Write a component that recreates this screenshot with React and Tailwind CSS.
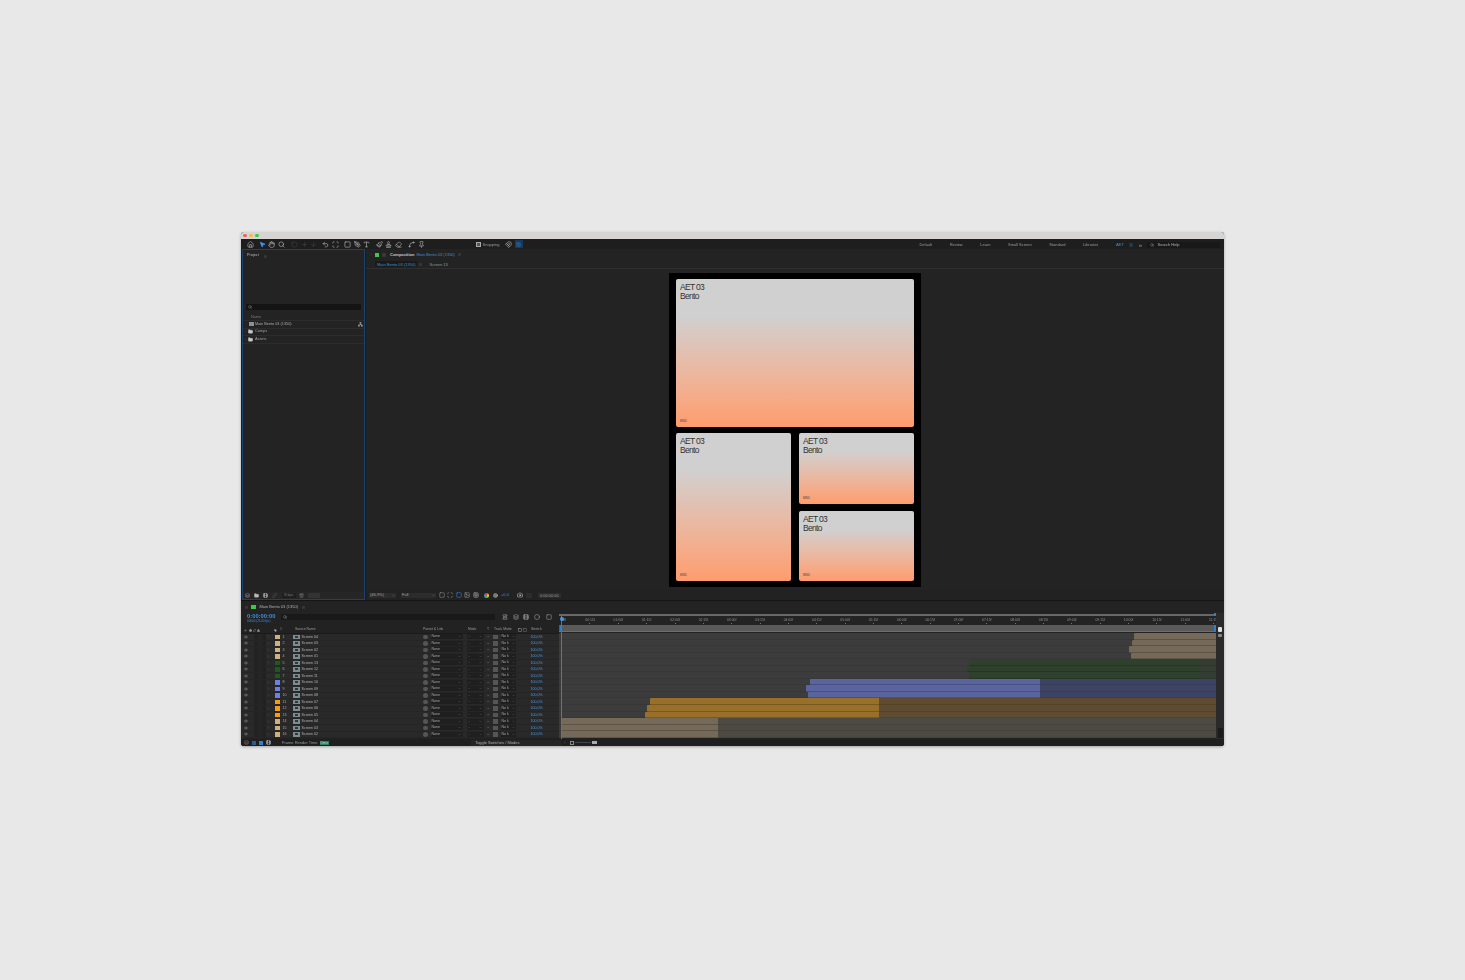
import {
  Home, MousePointer2, Hand, Search, RotateCcw, Plus, ArrowDown, Undo2, Scan, Square, PenTool, Type,
  Paintbrush, Stamp, Eraser, Spline, Pin, Magnet, Grid3x3, Folder, Network, Trash2, Camera, Image,
  Film, Sparkles, Layers, Circle, Eye, Lock, Tag, Spool, ChevronDown, ChevronRight, Menu,
} from 'lucide-react';

const LAYERS = [
  { n: 1, name: 'Screen 04', sw: 'bg-[#cdb27f]', start: 1134, bright: 1216, bar: 'bg-[#75695a]', dim: 'bg-[#4d4a43]' },
  { n: 2, name: 'Screen 03', sw: 'bg-[#cdb27f]', start: 1132, bright: 1216, bar: 'bg-[#75695a]', dim: 'bg-[#4d4a43]' },
  { n: 3, name: 'Screen 02', sw: 'bg-[#cdb27f]', start: 1129, bright: 1216, bar: 'bg-[#75695a]', dim: 'bg-[#4d4a43]' },
  { n: 4, name: 'Screen 01', sw: 'bg-[#cdb27f]', start: 1131, bright: 1216, bar: 'bg-[#75695a]', dim: 'bg-[#4d4a43]' },
  { n: 5, name: 'Screen 13', sw: 'bg-[#1c5a1c]', start: 969, bright: 1200, bar: 'bg-[#2f412c]', dim: 'bg-[#333d31]' },
  { n: 6, name: 'Screen 12', sw: 'bg-[#1c5a1c]', start: 967, bright: 1200, bar: 'bg-[#2f412c]', dim: 'bg-[#333d31]' },
  { n: 7, name: 'Screen 11', sw: 'bg-[#1c5a1c]', start: 969, bright: 1200, bar: 'bg-[#2f412c]', dim: 'bg-[#333d31]' },
  { n: 8, name: 'Screen 10', sw: 'bg-[#6d7fe8]', start: 810, bright: 1040, bar: 'bg-[#5a65a0]', dim: 'bg-[#3d4463]' },
  { n: 9, name: 'Screen 09', sw: 'bg-[#6d7fe8]', start: 806, bright: 1040, bar: 'bg-[#5a65a0]', dim: 'bg-[#3d4463]' },
  { n: 10, name: 'Screen 08', sw: 'bg-[#6d7fe8]', start: 808, bright: 1040, bar: 'bg-[#5a65a0]', dim: 'bg-[#3d4463]' },
  { n: 11, name: 'Screen 07', sw: 'bg-[#f59c12]', start: 650, bright: 879, bar: 'bg-[#98702a]', dim: 'bg-[#5e4b30]' },
  { n: 12, name: 'Screen 06', sw: 'bg-[#f59c12]', start: 647, bright: 879, bar: 'bg-[#98702a]', dim: 'bg-[#5e4b30]' },
  { n: 13, name: 'Screen 05', sw: 'bg-[#f59c12]', start: 645, bright: 879, bar: 'bg-[#98702a]', dim: 'bg-[#5e4b30]' },
  { n: 14, name: 'Screen 04', sw: 'bg-[#cdb27f]', start: 561, bright: 718, bar: 'bg-[#75695a]', dim: 'bg-[#4d4a43]' },
  { n: 15, name: 'Screen 03', sw: 'bg-[#cdb27f]', start: 561, bright: 718, bar: 'bg-[#75695a]', dim: 'bg-[#4d4a43]' },
  { n: 16, name: 'Screen 02', sw: 'bg-[#cdb27f]', start: 561, bright: 718, bar: 'bg-[#75695a]', dim: 'bg-[#4d4a43]' },
];

const RULER = [];
for (let i = 1; i <= 23; i++) {
  const sec = Math.floor(i / 2);
  RULER.push(`${String(sec).padStart(2, '0')}:${i % 2 ? '15' : '00'}f`);
}

function Tool({ icon: Icon, ml, dim, active }) {
  return (
    <span className={`${ml} w-[7px] h-[7px] flex items-center justify-center shrink-0`}>
      <Icon
        size={7}
        strokeWidth={2}
        className={active ? 'text-[#3f9bf0] fill-[#3f9bf0]' : dim ? 'text-[#444]' : 'text-[#bdbdbd]'}
      />
    </span>
  );
}

function Card({ className }) {
  return (
    <div className={`${className} rounded-[2px] bg-linear-to-b from-[#d0d0d0] from-25% to-[#ff9c6c] flex flex-col justify-between px-[4px] pt-[4px] pb-[4px]`}>
      <div className="text-[8.5px] leading-[9px] tracking-[-0.7px] text-[#333]">
        <div>AET 03</div>
        <div>Bento</div>
      </div>
      <div className="text-[3px] leading-[4px] text-[#444]">MND</div>
    </div>
  );
}

function LayerRow({ layer }) {
  return (
    <div className="h-[6.5px] flex items-center bg-[#292929] border-b border-[#252525] text-[3.6px] text-[#a8a8a8] shrink-0">
      <span className="w-[10px] flex justify-center"><Eye size={4} className="text-[#999]" /></span>
      <span className="w-[4px] h-full ml-[3px] bg-[#222]" />
      <span className="w-[4px] h-full bg-[#252525]" />
      <span className="w-[4px] h-full bg-[#222]" />
      <span className="w-[5px] ml-[1px] text-[#777]"><ChevronRight size={3} /></span>
      <span className={`${layer.sw} w-[4.5px] h-[4.5px] ml-[3px]`} />
      <span className="w-[10px] ml-[3px] pt-[1px]">{layer.n}</span>
      <span className="w-[7px] h-[4.5px] bg-[#7d8c90] flex items-center justify-center">
        <span className="w-[3px] h-[2px] bg-[#2c3a40]" />
      </span>
      <span className="w-[120px] ml-[2px] pt-[1px] text-[#b5b5b5]">{layer.name}</span>
      <span className="w-[5px] h-[4.5px] rounded-full bg-[#555] ml-[1px]" />
      <span className="w-[32px] h-[5px] ml-[3px] bg-[#1f1f1f] flex items-center justify-between pl-[1px] pr-[2px]">
        None<ChevronDown size={3} className="text-[#888]" />
      </span>
      <span className="w-[17px] h-[5px] ml-[4px] bg-[#1f1f1f] flex items-center justify-between px-[2px]">
        -<ChevronDown size={3} className="text-[#888]" />
      </span>
      <span className="w-[5px] ml-[2px] text-center">-</span>
      <span className="w-[5px] h-[4.5px] ml-[2px] bg-[#555]" />
      <span className="w-[15px] h-[5px] ml-[3px] bg-[#1f1f1f] flex items-center justify-between pl-[1px] pr-[1px]">
        No k<ChevronDown size={3} className="text-[#888]" />
      </span>
      <span className="ml-[15px] pt-[1px] text-[#4a9ae6]">100,0%</span>
    </div>
  );
}

function TrackRow({ layer }) {
  const left = layer.start - 559;
  const width = layer.bright - layer.start;
  return (
    <div className="h-[6.55px] flex bg-[#3c3c3c] shrink-0">
      <div className="h-full border-b border-[#373737] shrink-0" style={{ width: left }} />
      <div className={`${layer.bar} rounded-l-[1px] h-full border-b border-black/20 shrink-0`} style={{ width }} />
      <div className={`${layer.dim} flex-1 h-full border-b border-black/10`} />
    </div>
  );
}

export default function App() {
  return (
    <div className="h-[980px] w-full bg-[#e9e8e8] flex items-center justify-center font-['Liberation_Sans',sans-serif]">
      <div className="w-[983px] h-[514px] flex flex-col rounded-[3px] overflow-hidden bg-[#1c1c1c] shadow-[0_1px_3px_rgba(0,0,0,0.3)] -translate-y-px blur-[0.35px]">
        {/* title bar */}
        <div className="h-[7px] bg-[#d6d5d4] flex items-center gap-[2.5px] pl-[2px] shrink-0">
          <span className="w-[3.5px] h-[3.5px] rounded-full bg-[#f2635b]" />
          <span className="w-[3.5px] h-[3.5px] rounded-full bg-[#f6bd3b]" />
          <span className="w-[3.5px] h-[3.5px] rounded-full bg-[#3cc84b]" />
        </div>

        {/* toolbar */}
        <div className="h-[10px] bg-[#1e1e1e] flex items-center shrink-0 text-[4px] text-[#9a9a9a]">
          <Tool icon={Home} ml="ml-[5.5px]" />
          <Tool icon={MousePointer2} ml="ml-[5px]" active />
          <Tool icon={Hand} ml="ml-[2px]" />
          <Tool icon={Search} ml="ml-[3px]" />
          <Tool icon={RotateCcw} ml="ml-[6px]" dim />
          <Tool icon={Plus} ml="ml-[3px]" dim />
          <Tool icon={ArrowDown} ml="ml-[2px]" dim />
          <Tool icon={Undo2} ml="ml-[5px]" />
          <Tool icon={Scan} ml="ml-[3px]" />
          <Tool icon={Square} ml="ml-[5px]" />
          <Tool icon={PenTool} ml="ml-[3px]" />
          <Tool icon={Type} ml="ml-[2px]" />
          <Tool icon={Paintbrush} ml="ml-[6px]" />
          <Tool icon={Stamp} ml="ml-[2px]" />
          <Tool icon={Eraser} ml="ml-[3px]" />
          <Tool icon={Spline} ml="ml-[6px]" />
          <Tool icon={Pin} ml="ml-[3px]" />
          <span className="w-[5px] h-[5px] ml-[51px] border-[0.5px] border-[#aaa] bg-[#555] shrink-0" />
          <span className="ml-[2px] w-[19px] pt-[1px]">Snapping</span>
          <Tool icon={Magnet} ml="ml-[3px]" />
          <span className="ml-[3px] w-[8px] h-[8px] bg-[#16395c] flex items-center justify-center">
            <Grid3x3 size={5} className="text-[#2f6fb0]" />
          </span>
          <div className="ml-auto flex items-center pt-[1px]">
            <span>Default</span>
            <span className="ml-[17.5px]">Review</span>
            <span className="ml-[17.5px]">Learn</span>
            <span className="ml-[17.5px]">Small Screen</span>
            <span className="ml-[17.5px]">Standard</span>
            <span className="ml-[17.5px]">Libraries</span>
            <span className="ml-[17.5px] text-[#3f8fd8]">AET</span>
            <Menu size={4} className="ml-[5px] text-[#3f8fd8]" />
            <span className="ml-[6px] text-[6px] leading-none">»</span>
            <div className="ml-[5px] mr-[4px] w-[73px] h-[6px] bg-[#181818] flex items-center pl-[3px]">
              <Search size={4} className="text-[#bbb]" />
              <span className="ml-[3.5px] text-[#b4b4b4]">Search Help</span>
            </div>
          </div>
        </div>

        {/* main area */}
        <div className="h-[351px] flex shrink-0 bg-[#1c1c1c]">
          {/* project */}
          <div className="w-[125px] pl-px pr-px shrink-0 h-full">
            <div className="h-full border border-[#1b4270] bg-[#232323] flex flex-col text-[3.8px] text-[#a0a0a0]">
              <div className="h-[11px] flex items-center pl-[4px] pt-[1px] shrink-0">
                <span className="text-[#bbb]">Project</span>
                <Menu size={3} className="ml-[5px] text-[#777]" />
              </div>
              <div className="h-[6px] mt-[43px] mx-[3px] bg-[#141414] flex items-center pl-[2px] shrink-0">
                <Search size={4} className="text-[#bbb]" />
              </div>
              <div className="h-[7px] mt-[4px] pl-[8px] text-[#777] border-b border-[#2c2c2c] leading-[7px] shrink-0">Name</div>
              <div className="h-[7.5px] flex items-center pl-[6px] pr-[1px] border-b border-[#2c2c2c] shrink-0">
                <span className="w-[5px] h-[4px] bg-[#8a9296]" />
                <span className="ml-[1px] pt-[1px] text-[#aaa]">Main Bento 03 (1350)</span>
                <Network size={5} className="ml-auto text-[#c9c9c9]" />
              </div>
              <div className="h-[7.5px] flex items-center pl-[1px] border-b border-[#2c2c2c] shrink-0">
                <ChevronRight size={3} className="text-[#777]" />
                <Folder size={5} className="ml-[1px] text-[#c9c9c9] fill-[#c9c9c9]" />
                <span className="ml-[2px] pt-[1px]">Comps</span>
              </div>
              <div className="h-[7.5px] flex items-center pl-[1px] border-b border-[#2c2c2c] shrink-0">
                <ChevronRight size={3} className="text-[#777]" />
                <Folder size={5} className="ml-[1px] text-[#c9c9c9] fill-[#c9c9c9]" />
                <span className="ml-[2px] pt-[1px]">Assets</span>
              </div>
              <div className="mt-auto h-[7px] flex items-center pl-[2px] bg-[#262626] shrink-0">
                <Layers size={5} className="text-[#aaa]" />
                <Folder size={5} className="ml-[4px] text-[#bbb] fill-[#bbb]" />
                <Film size={5} className="ml-[4px] text-[#ccc]" />
                <Sparkles size={5} className="ml-[4px] text-[#555]" />
                <span className="ml-[5px] w-[14px] text-center text-[#777] bg-[#1f1f1f]">8 bpc</span>
                <Trash2 size={5} className="ml-[3px] text-[#888]" />
                <span className="ml-[4px] w-[12px] h-[5px] bg-[#333]" />
              </div>
            </div>
          </div>

          {/* composition */}
          <div className="flex-1 flex flex-col bg-[#232323] min-w-0">
            <div className="h-[11px] flex items-center pl-[4px] text-[4px] shrink-0">
              <ChevronRight size={3} className="text-[#777]" />
              <span className="ml-[2px] w-[4px] h-[4px] bg-[#3cc84b]" />
              <Menu size={4} className="ml-[3px] text-[#888]" />
              <span className="ml-[4px] pt-[1px] text-[#c9c9c9] font-bold">Composition</span>
              <span className="ml-[2px] pt-[1px] text-[#3f8fd8]">Main Bento 03 (1350)</span>
              <Menu size={3} className="ml-[3px] text-[#777]" />
            </div>
            <div className="h-[9px] flex items-center pl-[9px] text-[4px] border-b border-[#2f2f2f] shrink-0">
              <span className="h-[6px] px-[2px] bg-[#1a1a1a] text-[#3f8fd8] leading-[7px]">Main Bento 03 (1350)</span>
              <Menu size={3} className="ml-[2px] text-[#777]" />
              <span className="ml-[7px] pt-[1px] text-[#999]">Screen 13</span>
            </div>
            <div className="flex-1 flex items-center justify-center min-h-0 pt-px">
              <div className="w-[252px] h-[314px] bg-black pt-[6px] px-[7px] flex flex-col gap-[6px] shrink-0 text-[#333]">
                <Card className="h-[148px]" />
                <div className="flex gap-[8px] h-[148px]">
                  <Card className="w-[115px] h-full" />
                  <div className="flex-1 flex flex-col gap-[7px]">
                    <Card className="h-[71px]" />
                    <Card className="h-[70px]" />
                  </div>
                </div>
              </div>
            </div>
            <div className="h-[10px] flex items-center pl-[3px] text-[4px] text-[#a5a5a5] bg-[#222] shrink-0">
              <span className="w-[27px] h-[5px] bg-[#2c2c2c] flex items-center justify-between px-[1px]">
                (46,9%)<ChevronDown size={3} />
              </span>
              <span className="ml-[5px] w-[35px] h-[5px] bg-[#2c2c2c] flex items-center justify-between px-[1px]">
                Full<ChevronDown size={3} />
              </span>
              <Square size={6} className="ml-[3px] text-[#999]" />
              <Scan size={6} className="ml-[2px] text-[#999]" />
              <Square size={6} className="ml-[3px] text-[#3f8fd8]" />
              <Image size={6} className="ml-[2px] text-[#999]" />
              <Grid3x3 size={6} className="ml-[3px] text-[#999]" />
              <span className="ml-[5px] w-[5px] h-[5px] rounded-full bg-[conic-gradient(#e33,#ec3,#3c3,#38f,#e33)]" />
              <Circle size={5} className="ml-[4px] text-[#bbb] fill-[#777]" />
              <span className="ml-[3px] text-[#3f8fd8]">+0,0</span>
              <Camera size={6} className="ml-[8px] text-[#ccc]" />
              <span className="ml-[3px] w-[6px] h-[5px] bg-[#2c2c2c]" />
              <span className="ml-[6px] h-[5px] px-[2px] bg-[#2c2c2c] leading-[5px] text-[#999]">0:00:00:00</span>
            </div>
          </div>
        </div>

        {/* timeline */}
        <div className="flex-1 flex flex-col bg-[#222] border-t border-[#151515] min-h-0 relative">
          <div className="h-[12px] flex items-center pl-[4px] text-[4px] text-[#b0b0b0] bg-[#232323] shrink-0">
            <Menu size={3} className="text-[#777]" />
            <span className="ml-[3px] w-[4.5px] h-[4.5px] bg-[#3cc84b]" />
            <span className="ml-[4px]">Main Bento 03 (1350)</span>
            <Menu size={3} className="ml-[4px] text-[#777]" />
          </div>
          <div className="flex-1 flex min-h-0">
            {/* layer columns */}
            <div className="w-[318px] flex flex-col shrink-0">
              <div className="h-[14px] flex items-start pl-[6px] shrink-0">
                <div className="w-[33px]">
                  <div className="text-[5.8px] leading-[6px] font-bold text-[#3f8fd8]">0:00:00:00</div>
                  <div className="text-[3px] leading-[4px] text-[#3f8fd8]">00000 (25.00 fps)</div>
                </div>
                <div className="ml-[1px] w-[214px] h-[6px] mt-px bg-[#191919] flex items-center pl-[2px]">
                  <Search size={4} className="text-[#bbb]" />
                </div>
                <div className="flex items-center gap-[4.5px] ml-[7px] mt-px text-[#aaa]">
                  <Spool size={6} />
                  <Layers size={6} />
                  <Film size={6} />
                  <Circle size={6} />
                  <Square size={6} className="ml-[2px]" />
                </div>
              </div>
              <div className="h-[7px] flex items-center text-[3.4px] text-[#999] shrink-0 border-b border-[#1a1a1a]">
                <Eye size={3} className="ml-[3px]" />
                <Circle size={3} className="ml-[2px] fill-[#999]" />
                <Sparkles size={3} className="ml-[1px]" />
                <Lock size={3} className="ml-[1px] fill-[#999]" />
                <Tag size={3} className="ml-[14px] fill-[#999]" />
                <span className="ml-[3px]">#</span>
                <span className="ml-[13px] w-[128px]">Source Name</span>
                <span className="w-[45px]">Parent &amp; Link</span>
                <span className="w-[19px]">Mode</span>
                <span className="w-[7px]">T</span>
                <span className="w-[24px]">Track Matte</span>
                <Square size={4} className="text-[#ddd]" />
                <Square size={4} className="ml-[1px] text-[#aaa]" />
                <span className="ml-[4px]">Stretch</span>
              </div>
              {LAYERS.map((l) => <LayerRow key={l.n} layer={l} />)}
            </div>

            {/* time ruler and tracks */}
            <div className="flex-1 flex flex-col min-w-0">
              <div className="h-[20px] flex flex-col shrink-0 bg-[#232323]">
                <div className="h-[2px] mt-[1px] bg-[#686868] shrink-0" />
                <div className="h-[9px] flex items-center overflow-hidden pt-[1px] text-[3.4px] text-[#909090] shrink-0">
                  <span className="w-[16.8px] pl-[2px] shrink-0">00f</span>
                  {RULER.map((t) => (
                    <span key={t} className="w-[28.35px] flex flex-col items-center shrink-0">
                      {t}
                      <span className="w-px h-[1px] bg-[#777]" />
                    </span>
                  ))}
                </div>
                <div className="h-[6px] bg-[#5a5a5a] shrink-0" />
                <div className="h-px bg-[#20a52c] shrink-0" />
              </div>
              {LAYERS.map((l) => <TrackRow key={l.n} layer={l} />)}
            </div>

            {/* right gutter */}
            <div className="w-[8px] flex flex-col items-center shrink-0 bg-[#2a2a2a]">
              <span className="mt-[14px] w-[4px] h-[5px] bg-[#ddd] rounded-[1px]" />
              <span className="mt-[2px] w-[4px] h-[3px] bg-[#888] rounded-[1px]" />
              <span className="mt-auto mb-[1px] w-[5px] h-[10px] bg-[#1b1b1b]" />
            </div>
          </div>

          <div className="h-[7px] flex items-center bg-[#1f1f1f] text-[4px] text-[#9a9a9a] pl-[3px] shrink-0">
            <Layers size={5} className="text-[#888]" />
            <span className="ml-[3px] w-[4px] h-[4px] bg-[#2a5c90]" />
            <span className="ml-[3px] w-[4px] h-[4px] bg-[#2f7fd0]" />
            <Film size={5} className="ml-[3px] text-[#ccc]" />
            <span className="ml-[11px]">Frame Render Time</span>
            <span className="ml-[2px] px-[1px] bg-[#2f7f63] text-[#9cd8c0] leading-[4px]">0ms</span>
            <span className="ml-[142px] w-[90px] pl-[4px] text-[#b0b0b0] bg-[#262626]">Toggle Switches / Modes</span>
            <ChevronDown size={3} className="ml-[2px] rotate-90" />
            <span className="ml-[4px] w-[4px] h-[4px] border-[0.5px] border-[#888]" />
            <span className="w-[16px] h-px bg-[#444] ml-[1px]" />
            <span className="ml-[1px] w-[5px] h-[3px] bg-[#aaa]" />
          </div>

          {/* playhead sits over the ruler and the tracks */}
          <div className="absolute left-[320px] top-[14px] bottom-[7px] w-px bg-[#2f7fd0]" />
          <div className="absolute left-[318.5px] top-[16px] w-[4px] h-[4px] rounded-full bg-[#3f9bf0]" />
          <div className="absolute left-[319px] top-[24px] w-[2px] h-[7px] bg-[#2f7fd0]" />
          <div className="absolute right-[8px] top-[12px] w-[2px] h-[3px] bg-[#2f7fd0]" />
          <div className="absolute right-[8px] top-[24px] w-[2px] h-[7px] bg-[#2f7fd0]" />
        </div>
      </div>
    </div>
  );
}
